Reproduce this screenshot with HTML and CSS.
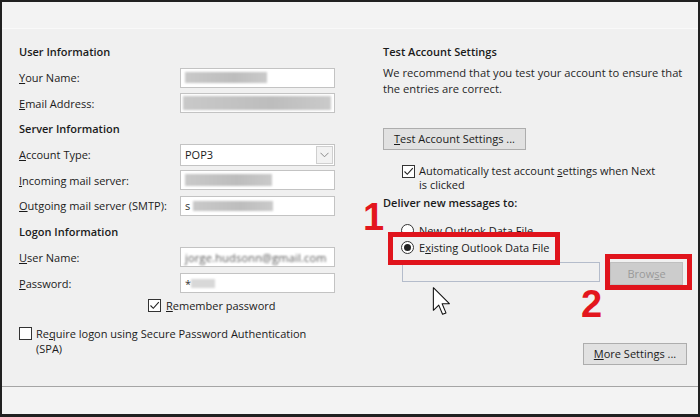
FILE: index.html
```html
<!DOCTYPE html>
<html lang="en">

<head>
    <meta charset="UTF-8">
    <meta name="viewport" content="width=device-width, initial-scale=1.0">
    <title>POP and IMAP Account Settings</title>
    <link rel="stylesheet" href="styles.css">
</head>

<body>

    <div class="window">
        <div class="dialog">
            <div class="topbar"></div>

            <div class="content">
                <div class="col-left">
                    <div class="form-grid">
                        <div class="section">User Information</div>

                        <label><u>Y</u>our Name:</label>
                        <div class="field"><span class="smudge name"></span></div>

                        <label><u>E</u>mail Address:</label>
                        <div class="field"><span class="smudge email"></span></div>

                        <div class="section">Server Information</div>

                        <label><u>A</u>ccount Type:</label>
                        <div class="field select">
                            <span>POP3</span>
                            <span class="arrow">
                                <svg width="9" height="6" viewBox="0 0 9 6">
                                    <polyline points="0.5,0.8 4.5,4.8 8.5,0.8" fill="none" stroke="#8a8a8a" stroke-width="1"/>
                                </svg>
                            </span>
                        </div>

                        <label><u>I</u>ncoming mail server:</label>
                        <div class="field"><span class="smudge incoming"></span></div>

                        <label><u>O</u>utgoing mail server (SMTP):</label>
                        <div class="field"><span class="lead">s</span><span class="smudge outgoing"></span></div>

                        <div class="section">Logon Information</div>

                        <label><u>U</u>ser Name:</label>
                        <div class="field"><span class="blurred">jorge.hudsonn@gmail.com</span></div>

                        <label><u>P</u>assword:</label>
                        <div class="field"><span class="lead">*</span><span class="smudge pass"></span></div>
                    </div>

                    <div class="check-row remember">
                        <span class="checkbox">
                            <svg width="11" height="11" viewBox="0 0 11 11">
                                <polyline points="1.5,5.5 4.3,8.3 9.8,2.2" fill="none" stroke="#222" stroke-width="1.1"/>
                            </svg>
                        </span>
                        <span><u>R</u>emember password</span>
                    </div>

                    <div class="check-row spa">
                        <span class="checkbox"></span>
                        <span>Re<u>q</u>uire logon using Secure Password Authentication<br>(SPA)</span>
                    </div>
                </div>

                <div class="col-right">
                    <div class="section">Test Account Settings</div>
                    <p class="intro">We recommend that you test your account to ensure that<br>the entries are correct.</p>

                    <button class="btn test-btn"><u>T</u>est Account Settings ...</button>

                    <div class="check-row auto">
                        <span class="checkbox">
                            <svg width="11" height="11" viewBox="0 0 11 11">
                                <polyline points="1.5,5.5 4.3,8.3 9.8,2.2" fill="none" stroke="#222" stroke-width="1.1"/>
                            </svg>
                        </span>
                        <span>Automatically test account <u>s</u>ettings when Next<br>is clicked</span>
                    </div>

                    <div class="section deliver">Deliver new messages to:</div>

                    <div class="radio-row first">
                        <span class="radio"></span>
                        <span><u>N</u>ew Outlook Data File</span>
                    </div>
                    <div class="radio-row">
                        <span class="radio checked"></span>
                        <span>E<u>x</u>isting Outlook Data File</span>
                    </div>

                    <div class="file-row">
                        <div class="file-input"></div>
                        <button class="btn browse" disabled>Brow<u>s</u>e</button>
                    </div>

                    <div class="more-row">
                        <button class="btn more"><u>M</u>ore Settings ...</button>
                    </div>
                </div>
            </div>

            <div class="footer"></div>
        </div>

        <!-- tutorial markup drawn over the dialog -->
        <div class="mark-box box-1"></div>
        <div class="mark-box box-2"></div>
        <div class="mark-num num-1">1</div>
        <div class="mark-num num-2">2</div>
        <svg class="cursor" width="21" height="29" viewBox="0 0 12.5 20.5">
            <path d="M0.5,0.5 L0.5,16.5 L4.3,12.8 L7,19.3 L9.4,18.3 L6.7,11.8 L11.8,11.8 Z" fill="#fff" stroke="#111" stroke-width="0.75" stroke-linejoin="round"/>
        </svg>
    </div>

</body>

</html>
```

FILE: styles.css
```css
body {
    margin: 0;
    padding: 0;
    font-family: 'Open Sans', 'Noto Sans', sans-serif;
    font-size: 11px;
    color: #1b1b1b;
}

.window {
    position: relative;
    width: 700px;
    height: 417px;
    box-sizing: border-box;
    padding: 2px 2px 3px 2px;
    background-color: #202020;
    overflow: hidden;
}

.dialog {
    height: 100%;
    background-color: #f0f0f0;
    display: flex;
    flex-direction: column;
}

.topbar {
    height: 26px;
    background-color: #f3f3f3;
    border-bottom: 1px solid #f9f9f9;
}

.content {
    height: 357px;
    box-sizing: border-box;
    display: flex;
    padding: 10px 0 0 17px;
    gap: 48px;
}

.footer {
    flex: 1;
    background-color: #f3f3f3;
    border-top: 1px solid #a5a5a5;
}

u {
    text-decoration: underline;
    text-underline-offset: 1px;
    text-decoration-thickness: 1px;
}

.section {
    font-weight: 600;
    color: #1b1b1b;
}

/* left column */

.col-left {
    width: 316px;
}

.form-grid {
    display: grid;
    grid-template-columns: 161px 155px;
    grid-auto-rows: 25.7px;
    align-items: center;
}

.form-grid .section {
    grid-column: 1 / 3;
}

.field {
    height: 20px;
    box-sizing: border-box;
    background-color: #fff;
    border: 1px solid #c3c3c3;
    display: flex;
    align-items: center;
    padding-left: 4px;
    overflow: hidden;
    white-space: nowrap;
}

.field.select {
    height: 22px;
    justify-content: space-between;
    padding-right: 1px;
}

.field.select .arrow {
    width: 17px;
    height: 18px;
    box-sizing: border-box;
    border: 1px solid #cfcfcf;
    background-color: #f2f2f2;
    display: flex;
    align-items: center;
    justify-content: center;
}

.smudge {
    display: inline-block;
    height: 11px;
    background: linear-gradient(90deg, #c9c9c9, #bdbdbd 60%, #cacaca);
    filter: blur(0.8px);
}

.smudge.name {
    width: 82px;
}

.smudge.email {
    width: 148px;
    height: 14px;
    margin-left: -2px;
}

.smudge.incoming {
    width: 87px;
    height: 12px;
}

.smudge.outgoing {
    width: 80px;
    height: 10px;
    margin-left: 3px;
}

.smudge.pass {
    width: 24px;
    height: 9px;
    background: #d8d8d8;
}

.lead {
    color: #333;
}

.blurred {
    color: #555;
    filter: blur(0.9px);
    letter-spacing: 0.2px;
}

.check-row {
    display: flex;
    align-items: flex-start;
    white-space: nowrap;
}

.checkbox {
    width: 13px;
    height: 13px;
    box-sizing: border-box;
    border: 1px solid #333;
    background-color: #fff;
    flex-shrink: 0;
    display: flex;
    align-items: center;
    justify-content: center;
}

.check-row.remember {
    height: 20px;
    align-items: center;
    padding-left: 129px;
    gap: 5px;
}

.check-row.spa {
    margin-top: 10px;
    line-height: 15px;
    gap: 4px;
}

.check-row.spa .checkbox {
    margin-top: 1px;
}

/* right column */

.col-right {
    width: 305px;
    display: flex;
    flex-direction: column;
    align-items: flex-start;
}

.col-right > .section:first-child {
    height: 25.7px;
    display: flex;
    align-items: center;
}

.intro {
    margin: 0;
    line-height: 16px;
    color: #262626;
    white-space: nowrap;
    font-size: 11.2px;
}

.btn {
    font-family: inherit;
    font-size: 11px;
    color: #1b1b1b;
    background-color: #e1e1e1;
    border: 1px solid #adadad;
    height: 22px;
    padding: 0 8px;
    cursor: pointer;
}

.test-btn {
    margin-top: 31px;
    width: 143px;
}

.check-row.auto {
    margin-top: 14px;
    margin-left: 19px;
    line-height: 14px;
    gap: 4px;
}

.check-row.auto .checkbox {
    margin-top: 1px;
}

.deliver {
    margin-top: 3px;
    line-height: 16px;
}

.radio-row {
    display: flex;
    align-items: center;
    height: 16px;
    margin-top: 1px;
    margin-left: 18px;
    gap: 5px;
}

.radio-row.first {
    margin-top: 12px;
}

.radio {
    width: 13px;
    height: 13px;
    box-sizing: border-box;
    border: 1px solid #333;
    border-radius: 50%;
    background-color: #fff;
    display: flex;
    align-items: center;
    justify-content: center;
}

.radio.checked::after {
    content: "";
    width: 7px;
    height: 7px;
    border-radius: 50%;
    background-color: #222;
}

.file-row {
    display: flex;
    align-items: flex-start;
    margin-top: 6px;
    margin-left: 19px;
    gap: 10px;
}

.file-input {
    width: 198px;
    height: 20px;
    box-sizing: border-box;
    border: 1px solid #b4bccb;
    background-color: #f0f0f0;
}

.btn.browse {
    width: 73px;
    height: 23px;
    background-color: #cccccc;
    border-color: #bfbfbf;
    color: #9a9a9a;
    cursor: default;
}

.more-row {
    align-self: stretch;
    display: flex;
    justify-content: flex-end;
    margin-top: 58px;
    padding-right: 1px;
}

.btn.more {
    width: 104px;
    padding: 0;
}

/* annotations */

.mark-box {
    position: absolute;
    box-sizing: border-box;
    border: 5px solid #e0141c;
}

.box-1 {
    left: 388px;
    top: 232px;
    width: 172px;
    height: 33px;
}

.box-2 {
    left: 605px;
    top: 254px;
    width: 87px;
    height: 36px;
}

.mark-num {
    position: absolute;
    font-family: 'Liberation Sans', Arial, sans-serif;
    font-weight: bold;
    font-size: 38px;
    line-height: 1;
    color: #e3161d;
}

.num-1 {
    left: 363px;
    top: 198px;
}

.num-2 {
    left: 581px;
    top: 285px;
}

.cursor {
    position: absolute;
    left: 431px;
    top: 287px;
}
```
